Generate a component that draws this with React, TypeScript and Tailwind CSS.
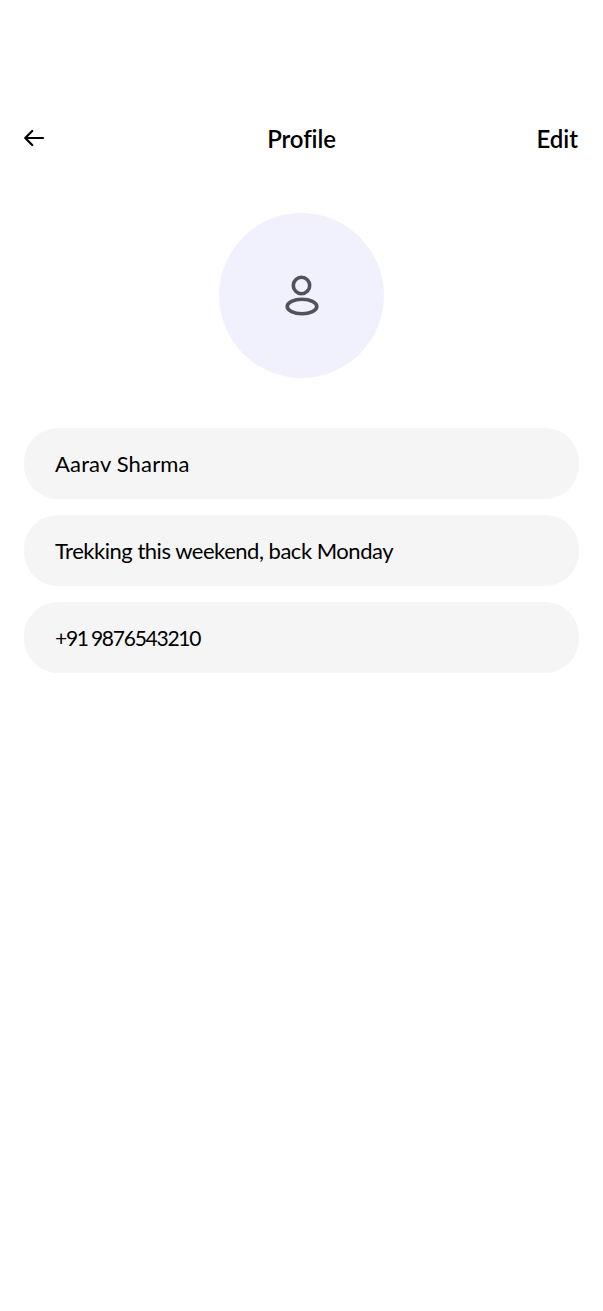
const fields = [
  { text: "Aarav Sharma", cls: "text-[22px] tracking-[0.15px]" },
  { text: "Trekking this weekend, back Monday", cls: "text-[22px] tracking-[-0.48px]" },
  { text: "+91 9876543210", cls: "text-[21px] tracking-[-1.25px] [word-spacing:-1px]" },
];

export default function App() {
  return (
    <div className="min-h-[1311px] bg-white px-6 pt-[120px] text-black font-['Lato',sans-serif]">
      <header className="grid h-[38px] grid-cols-[1fr_auto_1fr] items-center">
        <svg width="21" height="18" viewBox="0 0 21 18" fill="none" stroke="black" strokeWidth="2.2" strokeLinecap="round" strokeLinejoin="round" className="mt-[-2px]">
          <path d="M19 9H1.2M8.2 2 1.2 9l7 7" />
        </svg>
        <h1 className="text-[24px] font-semibold leading-none tracking-[-0.1px]">Profile</h1>
        <span className="justify-self-end pr-px text-[24px] font-semibold leading-none">Edit</span>
      </header>
      <div className="mt-[55px] flex justify-center">
        <div className="flex h-[165px] w-[165px] items-center justify-center rounded-full bg-[#f1f1fe]">
          <svg width="34" height="42" viewBox="0 0 34 42" fill="none" stroke="#52525f" strokeWidth="3.6">
            <circle cx="16.5" cy="10.5" r="8.2" />
            <ellipse cx="17" cy="31.5" rx="14.8" ry="7.2" />
          </svg>
        </div>
      </div>
      <div className="mt-[50px] flex flex-col gap-4">
        {fields.map((f) => (
          <div key={f.text} className={`flex h-[71px] items-center rounded-[34px] bg-[#f5f5f5] pl-[31px] pr-[30px] ${f.cls}`}>
            {f.text}
          </div>
        ))}
      </div>
    </div>
  );
}
